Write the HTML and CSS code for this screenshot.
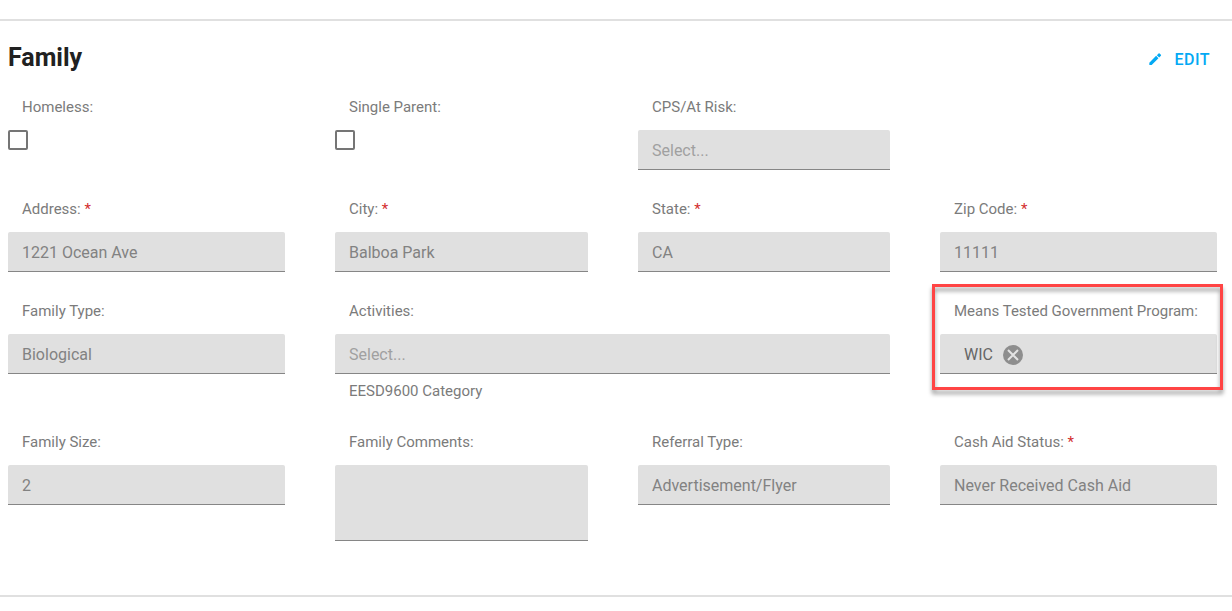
FILE: index.html
```html
<!DOCTYPE html>
<html lang="en">
<head>
    <meta charset="UTF-8">
    <meta name="viewport" content="width=device-width, initial-scale=1.0">
    <title>Family</title>
    <link rel="stylesheet" href="styles.css">
</head>
<body>
    <section class="family">
        <div class="section-header">
            <h2>Family</h2>
            <button type="button" class="edit">
                <svg width="16" height="16" viewBox="0 0 24 24" fill="currentColor"><path d="M3.500 16V19.500h3.500L17.200 9.300l-3.500-3.500L3.500 16zM20.900 5.600c.39-.39.39-1.020 0-1.410l-2.090-2.090c-.39-.39-1.020-.39-1.410 0l-2.600 2.600 3.500 3.500 2.600-2.600z"/></svg>
                Edit
            </button>
        </div>

        <form class="form-grid">
            <div class="field">
                <label for="homeless">Homeless:</label>
                <input type="checkbox" id="homeless" disabled>
            </div>
            <div class="field">
                <label for="singleParent">Single Parent:</label>
                <input type="checkbox" id="singleParent" disabled>
            </div>
            <div class="field">
                <label for="cps">CPS/At Risk:</label>
                <select id="cps" class="control empty" disabled><option>Select...</option></select>
            </div>

            <div class="field first">
                <label for="address">Address: <span class="required">*</span></label>
                <input type="text" id="address" class="control" value="1221 Ocean Ave" disabled>
            </div>
            <div class="field">
                <label for="city">City: <span class="required">*</span></label>
                <input type="text" id="city" class="control" value="Balboa Park" disabled>
            </div>
            <div class="field">
                <label for="state">State: <span class="required">*</span></label>
                <select id="state" class="control" disabled><option>CA</option></select>
            </div>
            <div class="field">
                <label for="zip">Zip Code: <span class="required">*</span></label>
                <input type="text" id="zip" class="control" value="11111" disabled>
            </div>

            <div class="field">
                <label for="familyType">Family Type:</label>
                <select id="familyType" class="control" disabled><option>Biological</option></select>
            </div>
            <div class="field wide">
                <label for="activities">Activities:</label>
                <select id="activities" class="control empty" disabled><option>Select...</option></select>
                <p class="help">EESD9600 Category</p>
            </div>
            <div class="field highlight" role="group" aria-labelledby="programLabel">
                <span class="label" id="programLabel">Means Tested Government Program:</span>
                <div class="control tag-box">
                    <span class="tag">WIC</span>
                    <button type="button" class="remove" aria-label="Remove WIC">
                        <svg width="20" height="20" viewBox="0 0 20 20"><circle cx="10" cy="10" r="10" fill="#8e8e8e"/><path d="M5 5l10 10M15 5L5 15" stroke="#e4e4e4" stroke-width="2"/></svg>
                    </button>
                </div>
            </div>

            <div class="field">
                <label for="familySize">Family Size:</label>
                <input type="text" id="familySize" class="control" value="2" disabled>
            </div>
            <div class="field">
                <label for="comments">Family Comments:</label>
                <textarea id="comments" class="control comments" disabled></textarea>
            </div>
            <div class="field">
                <label for="referral">Referral Type:</label>
                <select id="referral" class="control" disabled><option>Advertisement/Flyer</option></select>
            </div>
            <div class="field">
                <label for="cashAid">Cash Aid Status: <span class="required">*</span></label>
                <select id="cashAid" class="control" disabled><option>Never Received Cash Aid</option></select>
            </div>
        </form>
    </section>
</body>
</html>
```
FILE: styles.css
```css
* {
    margin: 0;
    padding: 0;
    box-sizing: border-box;
}

body {
    font-family: Roboto, sans-serif;
    font-size: 15px;
    line-height: 20px;
    color: #7b7b7b;
    background: #fff;
}

.family {
    margin-top: 19px;
    padding: 19px 15px 54px 8px;
    border-top: 2px solid #e0e0e0;
    border-bottom: 2px solid #e0e0e0;
}

.section-header {
    display: flex;
    justify-content: space-between;
    align-items: center;
    height: 36px;
    margin-bottom: 21px;
}

h2 {
    font-size: 25px;
    font-weight: 700;
    line-height: 32px;
    color: #212121;
}

.edit {
    display: flex;
    align-items: center;
    gap: 11px;
    padding: 4px 7px 0;
    border: none;
    background: none;
    font: 500 16px/20px Roboto, sans-serif;
    letter-spacing: 0.5px;
    text-transform: uppercase;
    color: #03a9f4;
    cursor: pointer;
}

.form-grid {
    display: grid;
    grid-template-columns: 277fr 253fr 252fr 277fr;
    gap: 29px 50px;
}

.field {
    display: flex;
    flex-direction: column;
    align-items: flex-start;
    min-width: 0;
}

.field.first {
    grid-column: 1;
}

.field.wide {
    grid-column: span 2;
}

label,
.label {
    padding-left: 14px;
    margin-bottom: 13px;
    white-space: nowrap;
}

.required {
    color: #d32f2f;
}

.control {
    display: block;
    width: 100%;
    height: 40px;
    padding: 2px 14px 0;
    border: none;
    border-bottom: 1px solid #868686;
    border-radius: 2px 2px 0 0;
    background: #e0e0e0;
    font: 16px/20px Roboto, sans-serif;
    color: #828282;
    opacity: 1;
    appearance: none;
}

.control.empty {
    color: #a0a0a0;
}

.control.comments {
    height: 76px;
    resize: none;
}

input[type="checkbox"] {
    width: 20px;
    height: 20px;
    border: 2px solid #757575;
    border-radius: 2px;
    appearance: none;
}

.help {
    padding: 7px 14px 2px;
}

.tag-box {
    display: flex;
    align-items: center;
    gap: 10px;
    padding: 2px 24px 0;
}

.tag {
    color: #666;
}

.remove {
    display: flex;
    border: none;
    background: none;
    cursor: pointer;
}

.highlight {
    position: relative;
    align-self: start;
}

.highlight::after {
    content: "";
    position: absolute;
    inset: -17px -6px -16px -8px;
    border: 3px solid #ff4444;
    filter: drop-shadow(0 4px 2px rgba(0, 0, 0, 0.4));
    pointer-events: none;
}
```
